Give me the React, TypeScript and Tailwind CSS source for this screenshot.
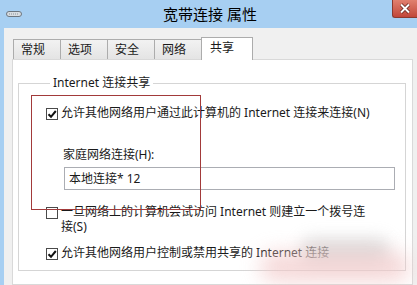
import type { ReactNode } from 'react'

const tabs = ['常规', '选项', '安全', '网络']

function Check({ checked }: { checked: boolean }) {
  return (
    <span className="flex h-[12px] w-[12px] shrink-0 items-center justify-center border border-[#4a4a4a] bg-white">
      {checked && (
        <svg width="10" height="10" viewBox="0 0 10 10">
          <path d="M1.5 5.2 L4 7.8 L8.8 2" fill="none" stroke="#111" strokeWidth="2" />
        </svg>
      )}
    </span>
  )
}

function Row({ checked, children, className }: { checked: boolean; children: ReactNode; className?: string }) {
  return (
    <div className={`flex items-start gap-[3px] ${className ?? ''}`}>
      <span className="mt-[3px]">
        <Check checked={checked} />
      </span>
      <div className="leading-[15px]">{children}</div>
    </div>
  )
}

export default function App() {
  return (
    <div className="relative flex h-[285px] w-[417px] flex-col overflow-hidden bg-[#a7cff2] font-['Noto_Sans','Noto_Sans_CJK_SC',sans-serif] text-[12px] text-[#1a1a1a]">
      {/* title bar */}
      <div className="flex h-[28px] shrink-0 items-start">
        <div className="ml-[6px] mt-[10px] w-[22px]">
          <svg width="16" height="8" viewBox="0 0 16 8">
            <rect x="0.5" y="1.5" width="15" height="5" rx="2.5" fill="#d8dde2" stroke="#6c7680" />
            <path d="M3 4 H13" stroke="#8a939b" strokeWidth="1" strokeDasharray="1 1" />
          </svg>
        </div>
        <div className="flex-1 pt-[4px] text-center text-[15px] leading-[20px] text-black">宽带连接 属性</div>
        <div className="flex h-[18px] w-[25px] items-center justify-center rounded-bl-[3px] border-b border-l border-[#8b3a30] bg-gradient-to-b from-[#e0806f] to-[#c1463a]">
          <svg width="12" height="11" viewBox="0 0 12 11">
            <path d="M2 1.5 L10 9.5 M10 1.5 L2 9.5" stroke="#5a1d16" strokeWidth="3.4" />
            <path d="M2 1.5 L10 9.5 M10 1.5 L2 9.5" stroke="#fff" strokeWidth="2" />
          </svg>
        </div>
      </div>

      {/* window body */}
      <div className="ml-[4px] flex flex-1 flex-col bg-[#f0f0f0] pl-[8px] pr-[4px] pt-[9px]">
        <div className="relative z-10 -mb-px ml-[1px] flex items-start">
          {tabs.map((t, i) => (
            <div
              key={t}
              className={`mt-[2px] flex h-[20px] w-[48px] items-center border border-b-0 border-[#acacac] bg-gradient-to-b from-[#f2f2f2] to-[#e4e4e4] pl-[7px] leading-[16px] ${i > 0 ? '-ml-px' : ''}`}
            >
              {t}
            </div>
          ))}
          <div className="-ml-px flex h-[23px] w-[52px] items-start border border-b-0 border-[#acacac] bg-white pl-[8px] pt-[2px] leading-[16px]">
            共享
          </div>
        </div>

        <div className="flex-1 border border-[#d9d9d9] bg-white">
          <fieldset className="ml-[5px] mr-[6px] mt-[16px] border border-[#d5d5d5] pb-[10px] pl-[27px]">
            <legend className="ml-[4px] px-[3px] leading-[14px]">Internet 连接共享</legend>

            <Row checked className="mt-[15px]">
              允许其他网络用户通过此计算机的 Internet 连接来连接(N)
            </Row>

            <div className="ml-[17px] mt-[27px] leading-[16px]">家庭网络连接(H):</div>
            <div className="ml-[18px] mt-[4px] flex h-[23px] w-[331px] items-center border border-[#abadb3] bg-white pl-[4px]">
              本地连接* 12
            </div>

            <Row checked={false} className="mt-[14px]">
              一旦网络上的计算机尝试访问 Internet 则建立一个拨号连
              <br />
              接(S)
            </Row>

            <Row checked className="mt-[11px]">
              允许其他网络用户控制或禁用共享的 Internet 连接
            </Row>
          </fieldset>
        </div>
      </div>

      {/* red annotation box */}
      <div className="pointer-events-none absolute left-[31px] top-[95px] h-[115px] w-[170px] border border-[#a23a3a]" />

      {/* faded watermark */}
      <div className="pointer-events-none absolute left-[300px] top-[238px] h-[26px] w-[90px] rounded-full bg-[#c9c9c9] opacity-60 blur-[8px]" />
      <div className="pointer-events-none absolute left-[260px] top-[252px] h-[30px] w-[150px] rounded-full bg-[#f2c9c9] opacity-70 blur-[10px]" />
    </div>
  )
}
